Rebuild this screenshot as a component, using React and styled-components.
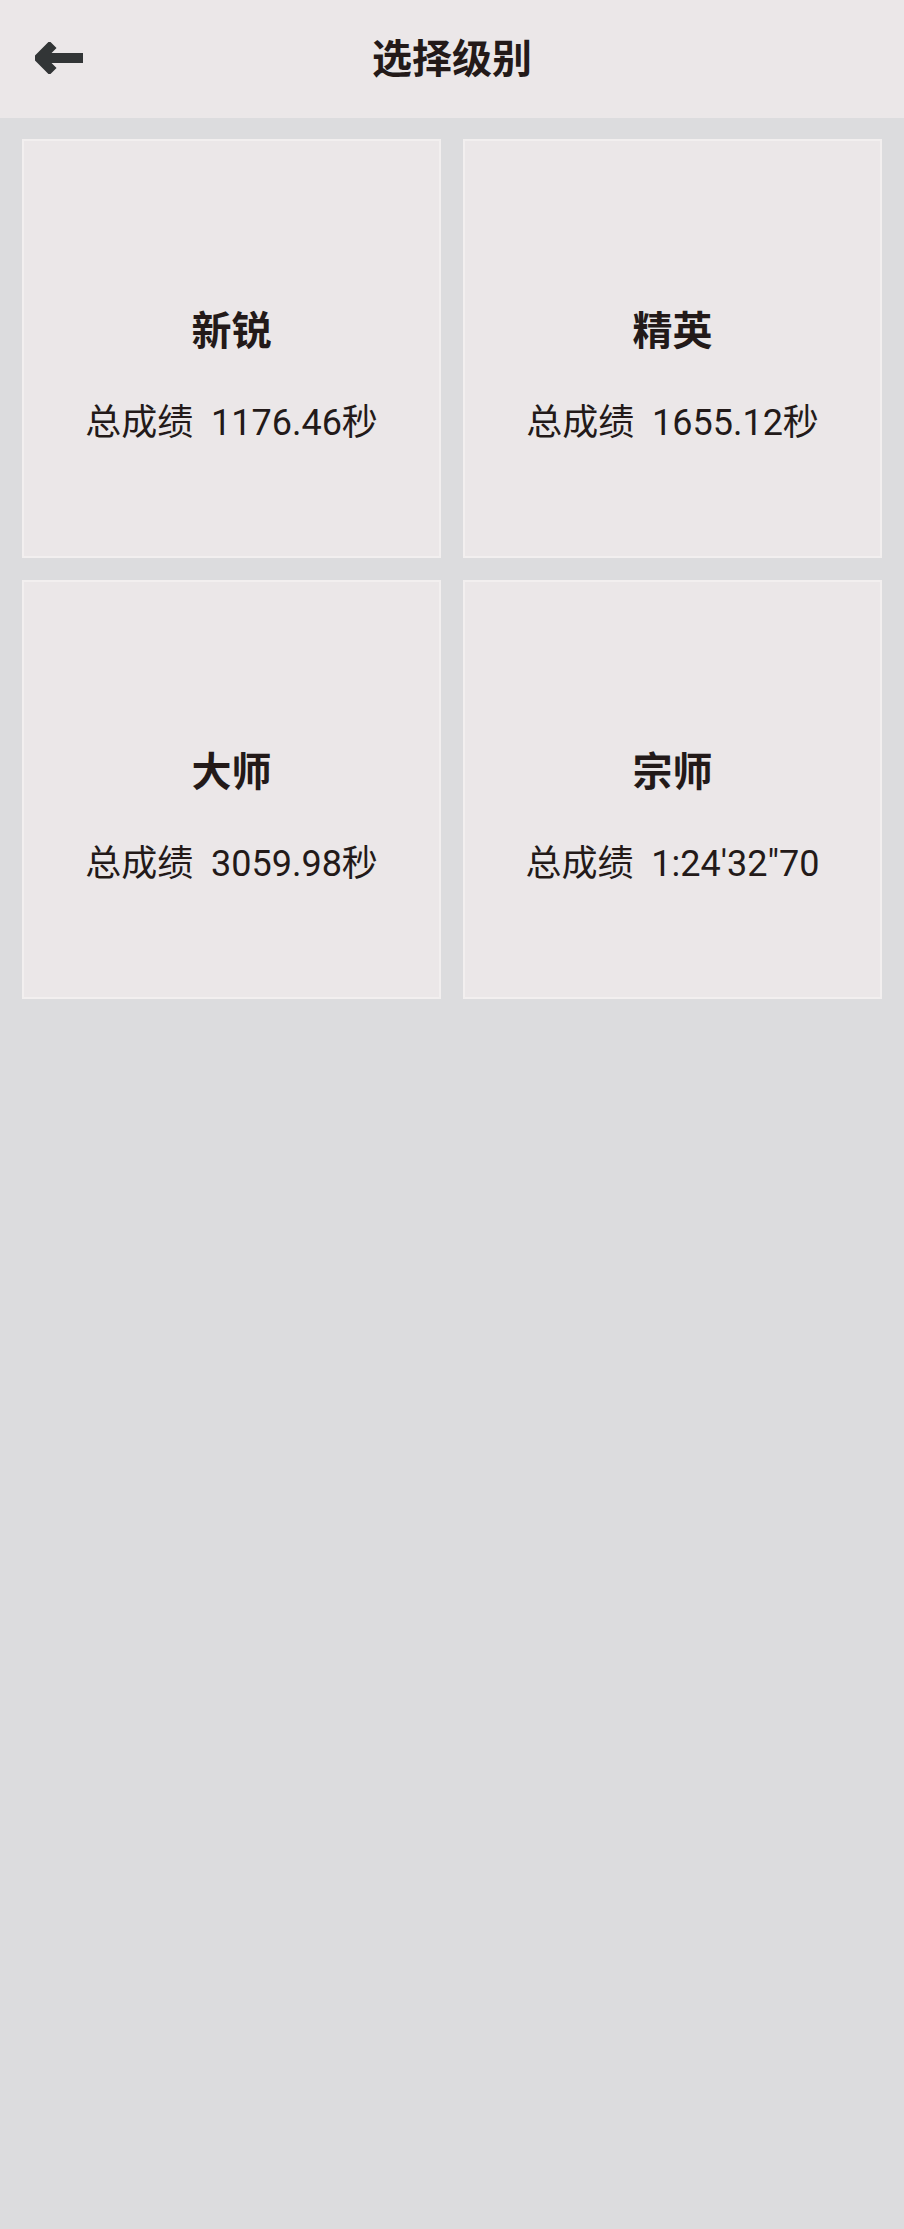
import React from "react";
import styled, { createGlobalStyle } from "styled-components";

const GlobalStyle = createGlobalStyle`
  html, body {
    margin: 0;
    padding: 0;
    background: #dcdcde;
  }
  body {
    min-height: 100vh;
    font-family: Roboto, "Noto Sans CJK SC", sans-serif;
    color: #231a19;
  }
  * { box-sizing: border-box; }
`;

const Page = styled.div`
  min-height: 100vh;
  background: #dcdcde;
  display: flex;
  flex-direction: column;
`;

const Header = styled.header`
  position: relative;
  height: 118px;
  background: #ebe7e8;
  display: flex;
  align-items: center;
  justify-content: center;
`;

const BackButton = styled.button`
  position: absolute;
  left: 30px;
  top: 35px;
  width: 60px;
  height: 46px;
  padding: 0;
  border: none;
  background: transparent;
  display: flex;
  align-items: center;
  justify-content: center;
  cursor: pointer;
`;

const Title = styled.h1`
  margin: 0;
  font-family: Roboto, "Noto Sans CJK SC", sans-serif;
  font-size: 40px;
  font-weight: 700;
  line-height: 48px;
  color: #231a19;
  transform: translateY(1px);
`;

const Grid = styled.main`
  display: grid;
  grid-template-columns: 1fr 1fr;
  gap: 22px;
  padding: 21px 22px;
`;

const Card = styled.div`
  aspect-ratio: 1 / 1;
  background: #ebe7e8;
  border: 2px solid #f2efef;
  display: flex;
  flex-direction: column;
  align-items: center;
  padding-top: 167px;
  cursor: pointer;
`;

const Level = styled.div`
  font-size: 40px;
  font-weight: 700;
  line-height: 48px;
  color: #231a19;
`;

const Score = styled.div`
  margin-top: 43px;
  font-size: 36px;
  font-weight: 400;
  line-height: 48px;
  white-space: pre;
  color: #231a19;
`;

const BackArrow = () => (
  <svg width="50" height="32" viewBox="0 0 50 32" fill="none">
    <polyline
      points="18,2.5 4.5,16 18,29.5"
      stroke="#323536"
      strokeWidth="10"
      strokeLinejoin="miter"
      strokeMiterlimit="4"
      strokeLinecap="butt"
    />
    <rect x="8" y="11" width="40" height="10" fill="#323536" />
  </svg>
);

const levels = [
  { name: "新锐", score: "1176.46秒" },
  { name: "精英", score: "1655.12秒" },
  { name: "大师", score: "3059.98秒" },
  { name: "宗师", score: "1:24'32\"70" },
];

export default function App() {
  return (
    <>
      <GlobalStyle />
      <Page>
        <Header>
          <BackButton aria-label="返回">
            <BackArrow />
          </BackButton>
          <Title>选择级别</Title>
        </Header>
        <Grid>
          {levels.map((l) => (
            <Card key={l.name}>
              <Level>{l.name}</Level>
              <Score>{"总成绩  " + l.score}</Score>
            </Card>
          ))}
        </Grid>
      </Page>
    </>
  );
}
